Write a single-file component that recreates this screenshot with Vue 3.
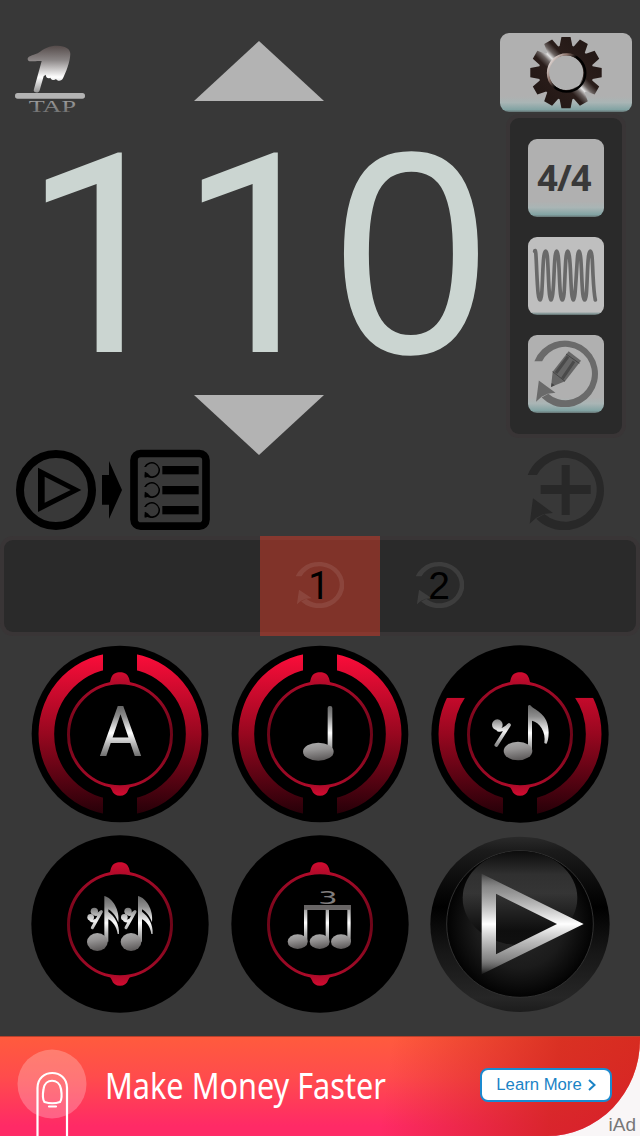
<script setup>
const gearPath = (() => {
  const pts = []
  for (let i = 0; i < 12; i++) {
    const corners = [[-13.5, 82], [-7.3, 108], [7.3, 108], [13.5, 82]]
    for (const [offset, radius] of corners) {
      const a = ((i * 30 + offset) * Math.PI) / 180
      pts.push(`${(228 + radius * Math.sin(a)).toFixed(1)} ${(157 - radius * Math.cos(a)).toFixed(1)}`)
    }
  }
  return `M${pts.join('L')}Z M280 157A52 52 0 1 0 176 157A52 52 0 1 0 280 157Z`
})()

const dials = [
  { name: 'accent', level: 'full' },
  { name: 'quarter', level: 'full' },
  { name: 'eighth', level: 'mid' },
  { name: 'sixteenth', level: 'off' },
  { name: 'triplet', level: 'off' },
]
const loops = [
  { n: 1, active: true },
  { n: 2, active: false },
]
</script>

<template>
  <div class="app">
    <svg class="defs" width="0" height="0" aria-hidden="true">
      <defs>
        <symbol id="loop" viewBox="823 45 240 240" preserveAspectRatio="none">
          <path d="M834 120A119 120 0 1 1 860 251L884 237A95 96 0 1 0 862 120Z" />
          <path d="M850 190L910 234L882 237L860 248L840 266Z" />
        </symbol>
        <linearGradient id="metal" gradientUnits="userSpaceOnUse" x1="0" y1="213" x2="0" y2="368">
          <stop offset="0" stop-color="#666" />
          <stop offset=".2" stop-color="#8c8c8c" />
          <stop offset=".52" stop-color="#fff" />
          <stop offset=".8" stop-color="#a0a0a0" />
          <stop offset="1" stop-color="#666" />
        </linearGradient>
        <linearGradient id="head" x1=".3" y1="0" x2=".5" y2="1">
          <stop offset="0" stop-color="#aaa" />
          <stop offset=".4" stop-color="#949292" />
          <stop offset="1" stop-color="#5b5858" />
        </linearGradient>
        <linearGradient id="rest" gradientUnits="userSpaceOnUse" x1="0" y1="248" x2="0" y2="330">
          <stop offset="0" stop-color="#777" />
          <stop offset=".5" stop-color="#f2f2f2" />
          <stop offset="1" stop-color="#8b8b8b" />
        </linearGradient>
        <linearGradient id="ring" gradientUnits="userSpaceOnUse" x1="0" y1="55" x2="0" y2="540">
          <stop offset="0" stop-color="#fc0d3a" />
          <stop offset=".5" stop-color="#97071f" />
          <stop offset="1" stop-color="#250008" />
        </linearGradient>
        <linearGradient id="thin" gradientUnits="userSpaceOnUse" x1="0" y1="112" x2="0" y2="482">
          <stop offset="0" stop-color="#d20b30" />
          <stop offset=".14" stop-color="#a00a27" />
          <stop offset=".5" stop-color="#6c0518" />
          <stop offset=".9" stop-color="#a60a28" />
          <stop offset="1" stop-color="#d20b30" />
        </linearGradient>
        <linearGradient id="hand" gradientUnits="userSpaceOnUse" x1="0" y1="47" x2="0" y2="190">
          <stop offset="0" stop-color="#554b4a" />
          <stop offset=".3" stop-color="#8a8585" />
          <stop offset=".66" stop-color="#fff" />
          <stop offset="1" stop-color="#8e8e8e" />
        </linearGradient>
        <linearGradient id="tap" x1="0" y1="0" x2="0" y2="1">
          <stop offset=".2" stop-color="#9a9a9a" />
          <stop offset="1" stop-color="#666" />
        </linearGradient>
        <linearGradient id="gear" gradientUnits="userSpaceOnUse" x1="152" y1="233" x2="304" y2="81">
          <stop offset="0" stop-color="#231815" />
          <stop offset=".36" stop-color="#2a1d1a" />
          <stop offset=".44" stop-color="#6b6361" />
          <stop offset=".5" stop-color="#e4e4e4" />
          <stop offset=".56" stop-color="#6b6361" />
          <stop offset=".64" stop-color="#2a1d1a" />
          <stop offset="1" stop-color="#231815" />
        </linearGradient>
        <linearGradient id="rim" x1="0" y1=".1" x2="1" y2=".8">
          <stop offset="0" stop-color="#fff" />
          <stop offset=".3" stop-color="#8a6f66" />
          <stop offset=".5" stop-color="#000" />
          <stop offset="1" stop-color="#000" />
        </linearGradient>
        <linearGradient id="bezel" x1="0" y1="0" x2="0" y2="1">
          <stop offset="0" stop-color="#2a2a2a" />
          <stop offset=".08" stop-color="#1b1b1b" />
          <stop offset=".4" stop-color="#000" />
          <stop offset=".65" stop-color="#161616" />
          <stop offset=".92" stop-color="#262626" />
          <stop offset="1" stop-color="#1c1c1c" />
        </linearGradient>
        <radialGradient id="bowl">
          <stop offset="0" stop-color="#2a2a2a" />
          <stop offset=".6" stop-color="#1b1b1b" />
          <stop offset="1" stop-color="#020202" />
        </radialGradient>
        <linearGradient id="gloss" x1="0" y1="0" x2="0" y2="1">
          <stop offset="0" stop-color="#0c0c0c" />
          <stop offset=".25" stop-color="#303030" />
          <stop offset=".45" stop-color="#353535" />
          <stop offset=".85" stop-color="#0e0e0e" />
          <stop offset="1" stop-color="#101010" />
        </linearGradient>
        <linearGradient id="play" x1="0" y1="0" x2="0" y2="1">
          <stop offset="0" stop-color="#fff" stop-opacity=".06" />
          <stop offset=".18" stop-color="#aaa" stop-opacity=".8" />
          <stop offset=".5" stop-color="#fff" />
          <stop offset=".82" stop-color="#aaa" stop-opacity=".8" />
          <stop offset="1" stop-color="#fff" stop-opacity=".04" />
        </linearGradient>
        <clipPath id="full"><path d="M40 40H249V560H40ZM351 40H560V560H351Z" /></clipPath>
        <clipPath id="mid"><path d="M40 188H249V560H40ZM351 188H560V560H351Z" /></clipPath>
      </defs>
    </svg>

    <header class="top">
      <section class="tempo">
        <div class="tempo-head">
          <svg class="tap" viewBox="0 0 330 264">
            <path fill="url(#hand)" d="M83 87C83 79 96 77 113 70C133 55 148 47 172 47C198 48 211 57 211 72C210 98 197 128 189 145C186 154 172 155 168 147C162 153 153 149 151 143C145 147 138 144 137 134L131 139L119 181C116 191 102 189 101 181L125 93C112 92 106 94 92 94C86 94 83 92 83 87Z" />
            <rect x="45" y="189" width="210" height="17" rx="8" fill="#b3b3b3" />
            <text x="86" y="247" class="tap-label" textLength="142" lengthAdjust="spacingAndGlyphs" fill="url(#tap)">TAP</text>
          </svg>
          <svg class="arrow" viewBox="0 0 130 60"><path d="M65 0L130 60H0Z" /></svg>
        </div>
        <svg class="bpm" viewBox="0 130 500 265">
          <text class="one" x="22.500" y="352">1</text>
          <text class="one" x="178.500" y="352">1</text>
          <text class="zero" transform="translate(333 353) scale(.97 1)">0</text>
        </svg>
        <svg class="arrow down" viewBox="0 0 130 60"><path d="M0 0H130L65 60Z" /></svg>
      </section>

      <aside class="side">
        <button class="key settings">
          <svg viewBox="30 38 396 237">
            <path :d="gearPath" fill="url(#gear)" fill-rule="evenodd" />
            <circle cx="230" cy="158" r="56" fill="none" stroke="url(#rim)" stroke-width="7" />
          </svg>
        </button>
        <div class="panel tools">
          <button class="key meter">4/4</button>
          <button class="key wave">
            <svg viewBox="84 51 228 234">
              <path d="M104 94C107 85 108 100 110 150C113 215 115 240 120 240S126 215 128 165S132 93 137 93S143 115 145 165S149 240 153 240S160 215 162 165S166 93 170 93S176 115 178 165S182 240 187 240S193 215 195 165S199 93 203 93S210 115 212 165S216 240 220 240S226 215 229 165S233 93 237 93S243 115 245 165S249 240 254 240S260 215 262 165S266 93 271 93S277 115 279 165Q282 222 286 240" />
            </svg>
          </button>
          <button class="key edit">
            <svg viewBox="84 345 228 234">
              <use href="#loop" x="94" y="361" width="200" height="200" fill="#6a6a6a" />
              <path fill="#666" d="M206 394L243 422L195 484L153 501L158 455Z" />
              <path fill="none" stroke="#4a4a4a" stroke-width="9" d="M204 410L168 459M222 424L187 476" />
              <path fill="none" stroke="#454545" stroke-width="3" d="M198 402L238 430M158 455L195 484" />
              <path fill="#444" d="M153 501L155 489L164 496Z" />
            </svg>
          </button>
        </div>
      </aside>
    </header>

    <div class="actions">
      <svg class="playlist" viewBox="0 0 690 315">
        <circle cx="168" cy="165" r="108" fill="none" stroke="#000" stroke-width="24" />
        <path fill-rule="evenodd" d="M114 98L244 165L114 231ZM134 125V203L212 165Z" />
        <path d="M306 120H327V78L366 165L327 252V209H306Z" />
        <rect x="402" y="55.500" width="216" height="218" rx="20" fill="none" stroke="#000" stroke-width="23" />
        <g v-for="i in 3" :key="i">
          <use href="#loop" x="430" :y="21 + i * 60" width="50" height="48" />
          <path :d="`M434 ${51 + i * 60}L453 ${64 + i * 60}L434 ${68 + i * 60}Z`" />
          <rect x="487" :y="33 + i * 60" width="109" height="25" />
        </g>
      </svg>
      <svg class="add" viewBox="0 0 240 240">
        <use href="#loop" width="240" height="240" />
        <path d="M50 105H113V45H137V105H200V132H137V195H113V132H50Z" />
      </svg>
    </div>

    <div class="strip">
      <div class="panel track">
        <div v-for="l in loops" :key="l.n" class="slot" :class="{ active: l.active }">
          <svg viewBox="0 0 120 100">
            <use href="#loop" x="33.300" y="25.700" width="51" height="46.300" fill="#fff" fill-opacity=".09" />
            <text :class="l.active ? 'num-one' : 'num-two'" x="59" y="63" text-anchor="middle">{{ l.n }}</text>
          </svg>
        </div>
      </div>
    </div>

    <main class="dials">
      <svg v-for="d in dials" :key="d.name" viewBox="0 12 600 570">
        <circle cx="300" cy="297" :r="d.level === 'full' ? 265 : 266" />
        <circle v-if="d.level !== 'off'" cx="300" cy="297" r="221" fill="none" stroke="url(#ring)" stroke-width="47" :clip-path="`url(#${d.level})`" />
        <ellipse cx="300" cy="299" rx="154.500" ry="156" fill="none" stroke="url(#thin)" stroke-width="9" />
        <path fill="url(#thin)" d="M268 148Q271 138 273 130C278 116 288 112 300 112S322 116 327 130Q329 138 332 148Q300 140 268 148ZM268 450Q300 458 332 450Q330 458 325 464C321 476 312 482 300 482S279 476 275 464Q270 458 268 450Z" />

        <text v-if="d.name === 'accent'" class="accent" x="237" y="364" textLength="129" lengthAdjust="spacingAndGlyphs" fill="url(#metal)">A</text>
        <g v-else-if="d.name === 'quarter'">
          <rect x="323" y="213" width="14" height="140" rx="6" fill="url(#metal)" />
          <ellipse cx="295" cy="350" rx="46" ry="27" fill="url(#head)" />
        </g>
        <g v-else-if="d.name === 'eighth'">
          <path fill="url(#metal)" d="M324 213Q328 207 334 214C344 226 386 236 386 292C386 310 383 322 379 327L373 324C379 290 358 262 336 257V348H324Z" />
          <ellipse cx="294" cy="348" rx="43" ry="28" fill="url(#head)" />
          <circle cx="232" cy="269" r="16" fill="url(#rest)" />
          <path fill="none" stroke="url(#rest)" stroke-width="11" stroke-linecap="round" stroke-linejoin="round" d="M235 284Q248 288 267 270L229 330" />
        </g>
        <g v-else-if="d.name === 'sixteenth'">
          <g v-for="x in [0, 101]" :key="x" :transform="`translate(${x} 0)`">
            <path fill="url(#metal)" d="M253 213C278 219 300 255 295 292C289 275 278 260 265 253V260C284 274 299 298 297 327H293C290 305 277 288 265 283V350H253Z" />
            <ellipse cx="232" cy="351" rx="31" ry="27" fill="url(#head)" />
            <circle cx="223" cy="259" r="11" fill="url(#rest)" />
            <circle cx="212" cy="277" r="10" fill="url(#rest)" />
            <path fill="none" stroke="url(#rest)" stroke-width="9" stroke-linecap="round" stroke-linejoin="round" d="M225 268Q234 270 244 260L217 308M213 286Q220 291 230 284" />
          </g>
        </g>
        <g v-else>
          <path fill="url(#metal)" d="M252 240H392V350H382V254H327V350H317V254H262V350H252Z" />
          <path fill="#686565" d="M252 240H392V254H252Z" />
          <ellipse v-for="x in [233, 299, 363]" :key="x" :cx="x" cy="350" rx="30" ry="22" fill="url(#head)" />
          <text class="three" x="294" y="237" textLength="59" lengthAdjust="spacingAndGlyphs">3</text>
        </g>
      </svg>

      <svg viewBox="0 12 600 570">
        <ellipse cx="300" cy="298" rx="269" ry="263" fill="url(#bezel)" />
        <circle cx="300" cy="297" r="220" fill="url(#bowl)" stroke="#303030" stroke-width="3" />
        <ellipse cx="300" cy="219" rx="172" ry="141" fill="url(#gloss)" />
        <path fill="url(#play)" fill-rule="evenodd" d="M185 146L491 297L185 448ZM228 206V388L411 297Z" />
      </svg>
    </main>

    <footer class="ad">
      <div class="ad-card">
        <svg class="touch" viewBox="0 0 100 100">
          <circle cx="52" cy="48" r="34.500" fill="#fff" fill-opacity=".24" />
          <g fill="none" stroke="#fff" stroke-width="2.200" stroke-linecap="round">
            <path d="M37.500 102V52C37.500 32 67 32 67 52V102" />
            <path d="M44.500 66C42 63 43 56 43.500 53C45 42 59 42 61 53C61.500 56 62.500 63 60 66Q52.500 68.500 44.500 66ZM49 70.500H56" />
          </g>
        </svg>
        <svg class="slogan" viewBox="0 0 290 50">
          <text x="1" y="37" textLength="281" lengthAdjust="spacingAndGlyphs">Make Money Faster</text>
        </svg>
        <a class="more">
          <span>Learn More</span>
          <svg viewBox="0 0 8 12"><path d="M1 1L6.500 6L1 11" /></svg>
        </a>
      </div>
      <span class="iad">iAd</span>
    </footer>
  </div>
</template>

<style>
body {
  margin: 0;
  background: #383838;
}
</style>

<style scoped>
.app {
  width: 640px;
  height: 1136px;
  overflow: hidden;
  background: #383838;
  font-family: "Liberation Sans", sans-serif;
  display: flex;
  flex-direction: column;
}
svg {
  display: block;
  flex: none;
}
.defs {
  position: absolute;
}
.top {
  height: 435px;
  display: flex;
}
.tempo {
  width: 500px;
}
.tempo-head {
  height: 100px;
  padding-top: 30px;
  display: flex;
}
.tap {
  width: 110px;
  height: 88px;
}
.tap-label {
  font: 50px "Liberation Serif", serif;
}
.arrow {
  width: 130px;
  height: 60px;
  margin: 11px 0 0 83.5px;
  fill: #b3b3b3;
}
.bpm {
  width: 500px;
  height: 265px;
  fill: #cbd5d1;
  overflow: visible;
}
.one {
  font: 279px Roboto, sans-serif;
}
.zero {
  font: 289px "Liberation Sans", sans-serif;
}
.arrow.down {
  margin: 0 0 0 193.5px;
}
.side {
  width: 132px;
  padding-top: 33px;
  display: flex;
  flex-direction: column;
}
.key {
  border: 0;
  padding: 0;
  width: 76px;
  height: 78px;
  border-radius: 9px;
  background: linear-gradient(#b0b0b0 80%, #a9b5b5 88%, #82a3a3 97%, #657373);
  display: flex;
  align-items: center;
  justify-content: center;
}
.key svg {
  width: 100%;
  height: 100%;
}
.settings {
  width: 132px;
  height: 79px;
}
.panel {
  background: #2a2a2a;
  border-radius: 9px;
  box-shadow: 0 0 0 4px #393536;
}
.tools {
  width: 112px;
  height: 295px;
  margin: 6px 0 0 10px;
  padding-top: 21px;
  display: flex;
  flex-direction: column;
  align-items: center;
  gap: 20px;
}
.meter {
  font: bold 36px "Open Sans", sans-serif;
  letter-spacing: -0.8px;
  padding: 0 4px 2px 0;
  color: #393939;
}
.wave {
  background: linear-gradient(#bfbfbf 96%, #8b9c9c 98%, #5d6c6c);
}
.wave path {
  fill: none;
  stroke: #696969;
  stroke-width: 11;
  stroke-linecap: round;
}
.actions {
  height: 105px;
  display: flex;
  justify-content: space-between;
}
.playlist {
  width: 230px;
  height: 105px;
}
.add {
  width: 80px;
  height: 80px;
  margin: 15px 36px 0 0;
  fill: #282828;
}
.strip {
  height: 99px;
  padding: 0 4px;
}
.track {
  height: 92px;
  padding-left: 256px;
  display: flex;
  align-items: center;
}
.slot {
  width: 120px;
  height: 100px;
}
.slot svg {
  width: 120px;
  height: 100px;
}
.active {
  background: rgba(214, 60, 40, 0.5);
}
.num-one {
  font: 38px Roboto, sans-serif;
}
.num-two {
  font: 39px "Liberation Sans", sans-serif;
}
.dials {
  height: 397px;
  display: grid;
  grid-template-columns: repeat(3, 200px);
  grid-auto-rows: 190px;
  padding-left: 20px;
}
.dials svg {
  width: 200px;
  height: 190px;
}
.accent {
  font: 400 212px Roboto, sans-serif;
}
.three {
  font: 54px "DejaVu Sans", sans-serif;
  fill: #807d7d;
}
.ad {
  height: 100px;
  background: #f9f6f7;
  display: grid;
}
.ad-card {
  grid-area: 1 / 1;
  height: 100px;
  box-sizing: border-box;
  border-top: 1px solid #b8402c;
  border-radius: 0 0 93px 0 / 0 0 96px 0;
  background:
    linear-gradient(98deg, transparent 60%, rgba(205, 35, 25, 0.75) 86%, rgba(205, 30, 25, 0.8)),
    linear-gradient(#ff5b3d, #ff4c4c 40%, #ff2a66 90%);
  display: flex;
  align-items: center;
}
.touch {
  width: 100px;
  height: 100px;
  margin-top: -1px;
}
.slogan {
  width: 290px;
  height: 50px;
  margin-left: 4px;
  fill: #fff;
  font: 36px "Noto Sans", sans-serif;
}
.more {
  box-sizing: border-box;
  width: 132px;
  height: 34px;
  margin: 0 0 3px 86px;
  border: 2px solid #1a8ad0;
  border-radius: 8px;
  background: #fff;
  color: #1a83c6;
  font-size: 16.7px;
  display: flex;
  align-items: center;
  justify-content: center;
  gap: 6px;
}
.more svg {
  width: 8px;
  height: 12px;
  fill: none;
  stroke: #1a83c6;
  stroke-width: 2;
}
.iad {
  grid-area: 1 / 1;
  justify-self: end;
  align-self: end;
  margin-right: 4px;
  font-size: 19px;
  line-height: 23px;
  color: #777;
}
</style>
